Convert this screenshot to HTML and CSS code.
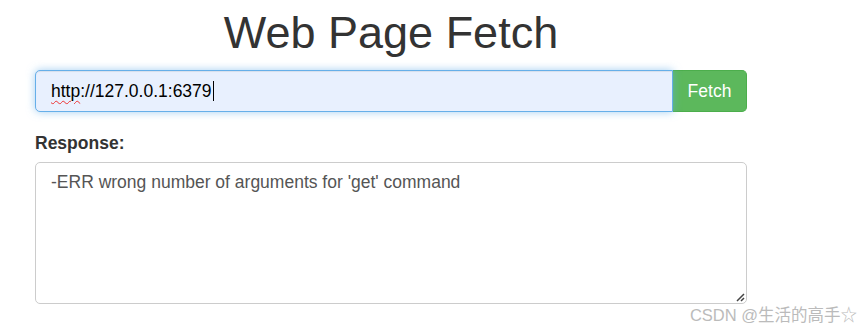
FILE: index.html
```html
<!DOCTYPE html>
<html>
<head>
<meta charset="utf-8">
<link rel="stylesheet" href="styles.css">
</head>
<body>
<div class="container">
  <h1 class="title">Web Page Fetch</h1>
  <div class="input-group">
    <div class="url-input"><span class="url-text"><span class="spell">http</span>://127.0.0.1:6379</span><span class="caret"></span></div>
    <button class="btn-fetch">Fetch</button>
  </div>
  <label class="label">Response:</label>
  <div class="response">-ERR wrong number of arguments for 'get' command<svg class="grip" width="11" height="11" viewBox="0 0 11 11"><path d="M10 3 L3 10 M10 7 L7 10" stroke="#444" stroke-width="1.5"/></svg></div>
</div>
<div class="watermark">CSDN @生活的高手☆</div>
</body>
</html>
```
FILE: styles.css
```css
html, body {
  margin: 0;
  padding: 0;
  background: #fff;
}
body {
  font-family: "Liberation Sans", Arial, "Noto Sans CJK SC", sans-serif;
  color: #333;
  font-size: 17.5px;
  width: 861px;
  height: 331px;
  overflow: hidden;
  position: relative;
}
.container {
  width: 712px;
  margin-left: 35px;
  padding-top: 8px;
}
.title {
  margin: 0;
  font-weight: 400;
  font-size: 45px;
  line-height: 50px;
  text-align: center;
  color: #333;
}
.input-group {
  display: flex;
  margin-top: 12px;
  height: 42px;
}
.url-input {
  flex: 1;
  box-sizing: border-box;
  height: 42px;
  border: 1px solid #66afe9;
  border-radius: 5px 0 0 5px;
  background: #e8f0fe;
  box-shadow: inset 0 1px 1px rgba(0,0,0,.075), 0 0 8px rgba(102,175,233,.6);
  padding: 0 15px;
  display: flex;
  align-items: center;
  color: #000;
  font-size: 17.5px;
  position: relative;
  z-index: 1;
}
.spell {
  text-decoration: underline wavy #e33;
  text-decoration-thickness: 1px;
  text-underline-offset: 3px;
}
.caret {
  display: inline-block;
  width: 1px;
  height: 20px;
  background: #000;
  margin-left: 1px;
}
.btn-fetch {
  width: 74px;
  height: 42px;
  box-sizing: border-box;
  border: 1px solid #4cae4c;
  border-left: 0;
  border-radius: 0 5px 5px 0;
  background: #5cb85c;
  color: #fff;
  font-family: "Liberation Sans", Arial, sans-serif;
  font-size: 17.5px;
  padding: 0;
  margin-left: 0;
}
.label {
  display: block;
  font-weight: bold;
  margin-top: 19px;
  line-height: 24px;
  margin-bottom: 7px;
}
.response {
  box-sizing: border-box;
  height: 142px;
  border: 1px solid #ccc;
  border-radius: 5px;
  padding: 7px 15px;
  color: #555;
  line-height: 24px;
  position: relative;
}
.grip {
  position: absolute;
  right: 1px;
  bottom: 1px;
}
.watermark {
  position: absolute;
  right: 4px;
  top: 305px;
  font-size: 16.5px;
  line-height: 20px;
  color: #bbb;
  font-family: "Liberation Sans", Arial, "Noto Sans CJK SC", sans-serif;
}
```
